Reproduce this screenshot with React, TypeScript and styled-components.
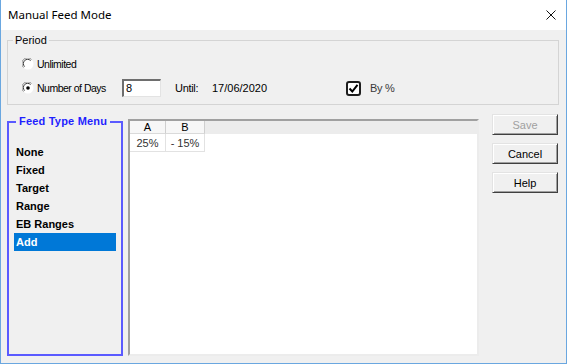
import React from 'react';
import styled, {createGlobalStyle} from 'styled-components';

const GlobalStyle = createGlobalStyle`
  html, body {
    margin: 0;
    padding: 0;
    background: #ffffff;
  }
  body {
    font-family: "Liberation Sans", Arial, sans-serif;
    font-size: 11px;
    color: #000;
  }
`;

const Window = styled.div`
  width: 567px;
  height: 364px;
  box-sizing: border-box;
  border: 1px solid #6aa7e0;
  border-top: none;
  display: flex;
  flex-direction: column;
  background: #f0f0f0;
`;

const TitleBar = styled.div`
  height: 30px;
  flex: none;
  background: #ffffff;
  display: flex;
  align-items: center;
  justify-content: space-between;
  padding: 0 10px 0 7px;
`;

const Title = styled.span`
  font-family: "Noto Sans", "Liberation Sans", sans-serif;
  font-size: 11.5px;
  color: #000;
  margin-top: -1px;
`;

const Body = styled.div`
  flex: 1;
  display: flex;
  flex-direction: column;
  gap: 9px;
  padding: 4px 7px 6px 6px;
`;

const Group = styled.fieldset`
  margin: 0;
  padding: 9px 0 7px 5px;
  border: 1px solid #d4d4d4;
  min-inline-size: 0;
`;

const GroupLegend = styled.legend`
  padding: 0 2px;
  line-height: 13px;
  font-size: 11px;
`;

const PeriodRows = styled.div`
  display: flex;
  flex-direction: column;
  gap: 7px;
  padding-left: 9px;
`;

const Row = styled.div<{ $h: number }>`
  display: flex;
  align-items: center;
  height: ${p => p.$h}px;
`;

const RadioLabel = styled.label<{ $w?: number }>`
  display: flex;
  align-items: center;
  gap: 3px;
  font-size: 10.5px;
  letter-spacing: -0.5px;
  width: ${p => (p.$w ? `${p.$w}px` : 'auto')};
`;

const DaysInput = styled.div`
  width: 39px;
  height: 18px;
  box-sizing: border-box;
  background: #fff;
  border-top: 2px solid #6e6e6e;
  border-left: 2px solid #6e6e6e;
  border-right: 1px solid #e3e3e3;
  border-bottom: 1px solid #e3e3e3;
  padding: 1px 2px;
  line-height: 13px;
`;

const UntilLabel = styled.span`
  margin-left: 14px;
  width: 37px;
  letter-spacing: -0.3px;
`;

const DateText = styled.span`
  width: 134px;
`;

const CheckBox = styled.span`
  width: 15px;
  height: 15px;
  box-sizing: border-box;
  border: 2px solid #1e1e1e;
  border-radius: 3px;
  background: #fff;
  display: flex;
  align-items: center;
  justify-content: center;
`;

const CheckText = styled.span`
  margin-left: 9px;
  color: #3a3a3a;
  letter-spacing: -0.3px;
`;

const Lower = styled.div`
  display: flex;
  align-items: flex-start;
`;

const MenuGroup = styled.fieldset`
  margin: 1px 0 0 0;
  width: 116px;
  height: 241px;
  box-sizing: border-box;
  padding: 15px 0 0 7px;
  border: 2px solid #5a5aff;
  min-inline-size: 0;
`;

const MenuLegend = styled.legend`
  padding: 0 3px;
  line-height: 13px;
  font-weight: bold;
  font-size: 11px;
  letter-spacing: 0.2px;
  color: #1f1fff;
`;

const MenuList = styled.div`
  display: flex;
  flex-direction: column;
`;

const MenuItem = styled.div<{ $active?: boolean }>`
  height: 18px;
  width: 102px;
  margin-left: -2px;
  padding-left: 2px;
  box-sizing: border-box;
  display: flex;
  align-items: center;
  font-weight: bold;
  background: ${p => (p.$active ? '#0078d7' : 'transparent')};
  color: ${p => (p.$active ? '#fff' : '#000')};
`;

const GridBox = styled.div`
  margin: 5px 0 0 5px;
  width: 351px;
  height: 237px;
  box-sizing: border-box;
  background: #fff;
  border-top: 2px solid #a0a0a0;
  border-left: 2px solid #a0a0a0;
  border-right: 2px solid #ececec;
  border-bottom: 2px solid #ececec;
  display: flex;
  flex-direction: column;
`;

const HeaderRow = styled.div`
  display: flex;
  height: 13px;
  background: #ececec;
`;

const DataRow = styled.div`
  display: flex;
  height: 18px;
`;

const Cell = styled.div<{ $w: number; $head?: boolean }>`
  width: ${p => p.$w}px;
  box-sizing: border-box;
  display: flex;
  align-items: center;
  justify-content: center;
  border-right: 1px solid ${p => (p.$head ? '#cfcfcf' : '#e2e2e2')};
  border-bottom: 1px solid ${p => (p.$head ? '#dadada' : '#e2e2e2')};
  background: ${p => (p.$head ? '#f7f7f7' : '#fff')};
  color: ${p => (p.$head ? '#000' : '#333')};
  line-height: 12px;
`;

const Buttons = styled.div`
  margin-left: 13px;
  display: flex;
  flex-direction: column;
  gap: 8px;
`;

const Button = styled.button<{ $disabled?: boolean }>`
  width: 66px;
  height: 21px;
  box-sizing: border-box;
  padding: 0;
  font-family: "Liberation Sans", Arial, sans-serif;
  font-size: 11px;
  background: #f0f0f0;
  border-top: 1px solid #e3e3e3;
  border-left: 1px solid #e3e3e3;
  border-right: 1px solid #404040;
  border-bottom: 1px solid #404040;
  box-shadow: inset 1px 1px 0 #fff, inset -1px -1px 0 #a0a0a0;
  color: ${p => (p.$disabled ? '#a0a0a0' : '#000')};
`;

const Radio = ({checked}: { checked?: boolean }) => (
  <svg width="12" height="12" viewBox="0 0 12 12">
    <circle cx="6" cy="6" r="5.5" fill="#fff"/>
    <path d="M 1.5 9.5 A 5 5 0 0 1 9.5 1.5" fill="none" stroke="#8a8a8a" strokeWidth="1"/>
    <path d="M 2.6 8.6 A 3.6 3.6 0 0 1 8.6 2.6" fill="none" stroke="#3c3c3c" strokeWidth="1"/>
    {checked ? <circle cx="6" cy="6" r="1.8" fill="#000"/> : null}
  </svg>
);

const menuItems = ['None', 'Fixed', 'Target', 'Range', 'EB Ranges', 'Add'];

function App() {
  return (
    <>
      <GlobalStyle/>
      <Window>
        <TitleBar>
          <Title>Manual Feed Mode</Title>
          <svg width="10" height="10" viewBox="0 0 10 10">
            <path d="M0.5 0.5 L9.5 9.5 M9.5 0.5 L0.5 9.5" stroke="#111" strokeWidth="1"/>
          </svg>
        </TitleBar>
        <Body>
          <Group>
            <GroupLegend>Period</GroupLegend>
            <PeriodRows>
              <Row $h={16}>
                <RadioLabel><Radio/>Unlimited</RadioLabel>
              </Row>
              <Row $h={18}>
                <RadioLabel $w={100}><Radio checked/>Number of Days</RadioLabel>
                <DaysInput>8</DaysInput>
                <UntilLabel>Until:</UntilLabel>
                <DateText>17/06/2020</DateText>
                <CheckBox>
                  <svg width="11" height="11" viewBox="0 0 11 11">
                    <path d="M1.5 5.5 L4.3 8.5 L9.5 1.8" fill="none" stroke="#000" strokeWidth="2"/>
                  </svg>
                </CheckBox>
                <CheckText>By %</CheckText>
              </Row>
            </PeriodRows>
          </Group>
          <Lower>
            <MenuGroup>
              <MenuLegend>Feed Type Menu</MenuLegend>
              <MenuList>
                {menuItems.map(m => (
                  <MenuItem key={m} $active={m === 'Add'}>{m}</MenuItem>
                ))}
              </MenuList>
            </MenuGroup>
            <GridBox>
              <HeaderRow>
                <Cell $w={36} $head>A</Cell>
                <Cell $w={39} $head>B</Cell>
              </HeaderRow>
              <DataRow>
                <Cell $w={36}>25%</Cell>
                <Cell $w={39}>- 15%</Cell>
              </DataRow>
            </GridBox>
            <Buttons>
              <Button $disabled>Save</Button>
              <Button>Cancel</Button>
              <Button>Help</Button>
            </Buttons>
          </Lower>
        </Body>
      </Window>
    </>
  );
}

export default App;
